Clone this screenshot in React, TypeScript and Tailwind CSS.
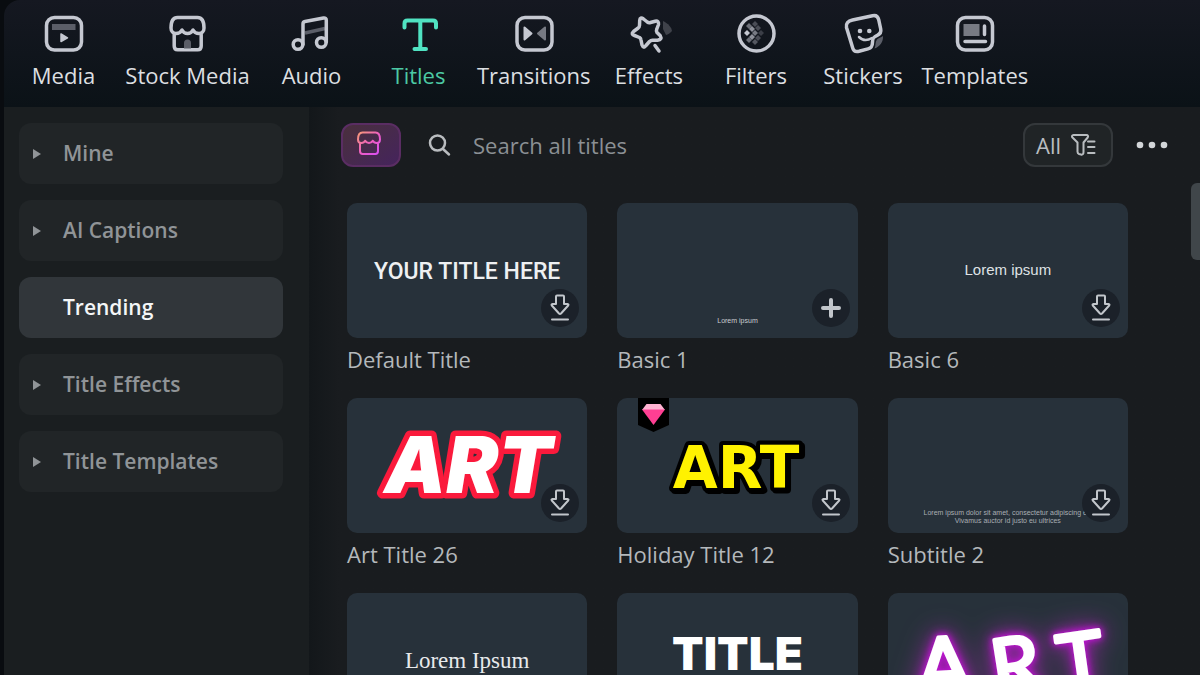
import type { ReactNode } from "react";
import clsx from "clsx";

function NavIcon({ children }: { children: ReactNode }) {
  return (
    <svg
      viewBox="0 0 40 40"
      className="h-10 w-10 overflow-visible"
      fill="none"
      stroke="currentColor"
      strokeWidth="3.5"
      strokeLinecap="round"
      strokeLinejoin="round"
      aria-hidden="true"
    >
      {children}
    </svg>
  );
}

const filterCells = [
  { x: 13, y: 12, fill: "#6d7079" },
  { x: 19, y: 10, fill: "#4a4d56" },
  { x: 16, y: 15, fill: "#8d9099" },
  { x: 22, y: 14, fill: "#4a4d56" },
  { x: 11, y: 19, fill: "#c5c8d1" },
  { x: 19, y: 19, fill: "#777a83" },
  { x: 25, y: 19, fill: "#3b3e47" },
  { x: 16, y: 23, fill: "#8d9099" },
  { x: 22, y: 24, fill: "#4a4d56" },
  { x: 13, y: 26, fill: "#6d7079" },
  { x: 19, y: 28, fill: "#555861" },
];

const navItems = [
  {
    label: "Media",
    icon: (
      <NavIcon>
        <rect x="2.5" y="3.5" width="35" height="32.5" rx="8" />
        <path d="M8 10h23.5v6H8z" fill="#5b5e68" stroke="none" />
        <path d="M17 20v7.5l6.500-3.700z" fill="currentColor" strokeWidth="1.5" />
      </NavIcon>
    ),
  },
  {
    label: "Stock Media",
    wide: true,
    icon: (
      <NavIcon>
        <path d="M9.5 3.5h20c4.5 0 6.5 4 6.5 10.5 0 3.5-2.3 5.5-5 5.5-2.8 0-5-1.5-6-3.5-1 2-3 3.5-5.5 3.500s-4.500-1.500-5.500-3.500c-1 2-3.200 3.500-6 3.500-2.700 0-5-2-5-5.500C3 7.500 5 3.500 9.500 3.500z" />
        <path d="M6.200 20.5V32c0 2.500 1.300 3.800 3.500 3.800h20c2.200 0 3.500-1.300 3.500-3.800V20.500" />
        <path d="M16 34.500V29a3.500 3.500 0 0 1 7 0v5.500z" fill="#5b5e68" stroke="none" />
      </NavIcon>
    ),
  },
  {
    label: "Audio",
    icon: (
      <NavIcon>
        <path d="M13 19l20-4.500" stroke="#5b5e68" strokeLinecap="butt" />
        <circle cx="6" cy="30.500" r="4.800" />
        <circle cx="29.300" cy="28.500" r="4.800" />
        <path d="M11 30.500V10c0-1.500.8-2.300 2-2.500L31.500 4c1.700-.3 2.800.5 2.800 2.200V28" />
      </NavIcon>
    ),
  },
  {
    label: "Titles",
    active: true,
    icon: (
      <NavIcon>
        <path d="M5.500 13.500v-4c0-2 1-3 3-3H34c2 0 3 1 3 3v4M21.300 6.500V35M15.500 35H27" strokeWidth="4" />
      </NavIcon>
    ),
  },
  {
    label: "Transitions",
    icon: (
      <NavIcon>
        <rect x="3" y="3.5" width="35" height="32.5" rx="8" />
        <path d="M10.500 13.500v12l7-6z" fill="currentColor" strokeWidth="2" />
        <path d="M31 13.500v12l-7-6z" fill="#777a83" stroke="#777a83" strokeWidth="2" />
      </NavIcon>
    ),
  },
  {
    label: "Effects",
    icon: (
      <NavIcon>
        <path d="M34 7c5.500 2.500 8.500 6.500 9 10-2 2.500-4 3.500-6 4l-3-6z" fill="#3f424a" stroke="none" />
        <path d="M4.500 17.500Q1.500 20 5.500 21.500L10.500 23.500Q11.800 24.400 12 26L13 31Q14.500 35 17 31.500L20.500 27.500Q21.800 26.300 23.500 26.200L28.500 26.200Q33.500 25.500 31.300 21.800L28 18.500Q27 16.800 27.800 15L29.500 10.500Q30 6.500 26.200 7.200L21.500 8.500Q19.700 9 18.300 8L14.500 5Q11 2.500 10.700 6.500L10.500 11.500Q10.400 13 9.200 14Z" />
        <path d="M26 31.500l4 5.500" />
      </NavIcon>
    ),
  },
  {
    label: "Filters",
    icon: (
      <NavIcon>
        <circle cx="20.500" cy="19.500" r="17.500" />
        {filterCells.map(({ x, y, fill }) => (
          <path key={`${x}-${y}`} d={`M${x} ${y - 3}l3 3-3 3-3-3z`} fill={fill} stroke="none" />
        ))}
      </NavIcon>
    ),
  },
  {
    label: "Stickers",
    icon: (
      <NavIcon>
        <path d="M40 22c.4 6-3 10.500-8.500 12.500 1.500-3 .5-6.500 2.500-9 1.500-1.700 4-2 6-3.500z" fill="#5b5e68" stroke="none" />
        <path d="M9.500 6l20-4.300c3.200-.7 5.500.8 6.200 4l2 9.300c.7 3.200-.5 5-3.500 6.300-3.700 1.500-4.700 3-4.700 6.700 0 4.200-1 6-4.500 6.900l-9 2.400c-3.500.8-5.700-.7-6.500-4L3.500 13.500C2.600 9.500 5 7 9.500 6z" />
        <path d="M16 23c3.500 3.500 8.500 3.700 13 1" strokeWidth="2.5" />
        <circle cx="17" cy="17" r="2.300" fill="currentColor" stroke="none" />
        <circle cx="26.300" cy="17" r="2.300" fill="currentColor" stroke="none" />
      </NavIcon>
    ),
  },
  {
    label: "Templates",
    icon: (
      <NavIcon>
        <rect x="2.5" y="3.5" width="35" height="32.5" rx="8" />
        <path d="M8.500 10h16v12h-16z" fill="#777a83" stroke="none" />
        <path d="M29.500 12v8.500M10 27.500h20.500" />
      </NavIcon>
    ),
  },
];

const categories = [
  { label: "Mine", expandable: true },
  { label: "AI Captions", expandable: true },
  { label: "Trending", expandable: false },
  { label: "Title Effects", expandable: true },
  { label: "Title Templates", expandable: true },
];

function StoreIcon() {
  return (
    <svg viewBox="0 0 26 26" className="h-[26px] w-[26px]" fill="none" aria-hidden="true">
      <defs>
        <linearGradient id="store" x1="0" y1="0" x2="1" y2="1">
          <stop offset="0" stopColor="#f79a76" />
          <stop offset="0.5" stopColor="#ee5fc0" />
          <stop offset="1" stopColor="#d64df5" />
        </linearGradient>
      </defs>
      <path
        d="M6.500 2.500h13c3 0 4.500 2.500 4.500 7 0 2.200-1.500 3.500-3.300 3.500s-3.200-.8-3.900-2.300C16 12.200 14.700 13 13 13s-3-.8-3.800-2.300C8.500 12.200 7.100 13 5.300 13S2 11.700 2 9.500c0-4.500 1.500-7 4.500-7zM4 13v8c0 2 1 3 2.700 3h12.600c1.700 0 2.700-1 2.700-3v-8"
        stroke="url(#store)"
        strokeWidth="2"
        strokeLinejoin="round"
      />
    </svg>
  );
}

function DownloadIcon() {
  return (
    <svg
      viewBox="0 0 20 28"
      className="h-7 w-5"
      fill="none"
      stroke="currentColor"
      strokeWidth="2"
      strokeLinecap="round"
      strokeLinejoin="round"
      aria-hidden="true"
    >
      <path d="M6 2.500q0-1 1-1h6q1 0 1 1V10h3.500q1.500.3.700 1.500L11 19.500q-1 1-2 0l-7.200-8Q1 10.300 2.500 10H6zM2 25.500h16" />
    </svg>
  );
}

function PlusIcon() {
  return (
    <svg viewBox="0 0 20 20" className="h-5 w-5" stroke="currentColor" strokeWidth="4" strokeLinecap="round" aria-hidden="true">
      <path d="M10 2v16M2 10h16" />
    </svg>
  );
}

function PremiumBadge() {
  return (
    <svg viewBox="0 0 31 34" className="absolute top-0 left-[21px] h-[34px] w-[31px]" role="img" aria-label="Premium">
      <path d="M0 0h31v27l-15.500 7L0 27z" fill="#000" />
      <path d="M8.500 6h14l4.500 6H4z" fill="#ffb3d2" />
      <path d="M4 11.500h23L15.500 27z" fill="#ff3f93" />
    </svg>
  );
}

const titles = [
  {
    name: "Default Title",
    preview: (
      <p className="pt-1 font-['Roboto',sans-serif] text-[23px] font-medium text-[#eef0f2]">YOUR TITLE HERE</p>
    ),
  },
  {
    name: "Basic 1",
    added: true,
    preview: (
      <p className="mt-auto mb-3 font-['Liberation_Sans',sans-serif] text-[7px] text-[#c9cdd1]">Lorem ipsum</p>
    ),
  },
  {
    name: "Basic 6",
    preview: (
      <p className="font-['Liberation_Sans',sans-serif] text-[15px] text-[#dfe2e5]">Lorem ipsum</p>
    ),
  },
  {
    name: "Art Title 26",
    preview: (
      <svg viewBox="0 0 240 135" className="h-full w-full">
        <text
          x="121"
          y="95"
          textAnchor="middle"
          className="font-['Inter',sans-serif] text-[78px] font-black italic"
          fill="#fff"
          stroke="#fa1a3c"
          strokeWidth="11"
          strokeLinejoin="round"
          paintOrder="stroke"
        >
          ART
        </text>
      </svg>
    ),
  },
  {
    name: "Holiday Title 12",
    premium: true,
    preview: (
      <svg viewBox="0 0 240 135" className="h-full w-full">
        <text
          x="119"
          y="90"
          textAnchor="middle"
          className="font-['DejaVu_Sans',sans-serif] text-[58px] font-bold [filter:drop-shadow(2px_2px_0_#000)]"
          fill="#fff200"
          stroke="#000"
          strokeWidth="8"
          strokeLinejoin="round"
          paintOrder="stroke"
        >
          ART
        </text>
      </svg>
    ),
  },
  {
    name: "Subtitle 2",
    preview: (
      <p className="mt-auto mb-2 text-center font-['Liberation_Sans',sans-serif] text-[7px] leading-2 whitespace-nowrap text-[#a9aeb3]">
        Lorem ipsum dolor sit amet, consectetur adipiscing elit
        <br />
        Vivamus auctor id justo eu ultrices
      </p>
    ),
  },
  {
    name: "Lorem Ipsum",
    preview: (
      <p className="font-['Liberation_Serif',serif] text-[23px] text-[#e8eaec]">Lorem Ipsum</p>
    ),
  },
  {
    name: "Title",
    preview: (
      <p className="pb-4 font-['Inter',sans-serif] text-[46px] leading-none font-black text-white">TITLE</p>
    ),
  },
  {
    name: "Art Title",
    preview: (
      <svg viewBox="0 0 240 135" className="h-full w-full">
        <g
          className="font-['Lato',sans-serif] text-[78px] font-normal [filter:drop-shadow(0_0_3px_#c414d8)_drop-shadow(0_0_5px_#a316b4)_drop-shadow(0_0_12px_#8a2d98)]"
          fill="#fff"
          stroke="#fff"
          strokeWidth="4"
          strokeLinejoin="round"
        >
          <text x="29" y="100" transform="rotate(-3 54 70)">A</text>
          <text x="103" y="100" transform="rotate(-9 125 70)">R</text>
          <text x="169" y="96" transform="rotate(-8 190 65)">T</text>
        </g>
      </svg>
    ),
  },
];

function TopNav() {
  return (
    <nav
      aria-label="Library"
      className="flex h-[107px] shrink-0 rounded-tl-2xl bg-linear-to-b from-[#151821] to-[#0b1217] pt-[14px] pl-[6px]"
    >
      {navItems.map(({ label, icon, active, wide }) => (
        <button
          key={label}
          type="button"
          className={clsx(
            "flex h-fit shrink-0 flex-col items-center px-[5px]",
            wide ? "min-w-[141px]" : "min-w-[107px]",
            active ? "text-[#50e3c2]" : "text-[#c5c8d1]",
          )}
        >
          {icon}
          <span className={clsx("mt-[6px] text-[22px] leading-[30px]", active ? "text-[#4cc9a4]" : "text-[#dcdfe1]")}>
            {label}
          </span>
        </button>
      ))}
    </nav>
  );
}

function Sidebar() {
  return (
    <aside className="w-[305px] shrink-0 bg-[#1a1e20] pt-4 pr-[26px] pl-[15px]">
      <ul className="flex flex-col gap-4">
        {categories.map(({ label, expandable }) => (
          <li key={label}>
            <button
              type="button"
              className={clsx(
                "flex h-[61px] w-full items-center rounded-xl pl-[14px] text-[21px] font-semibold",
                expandable ? "bg-[#212527] text-[#909497]" : "bg-[#31363a] text-[#f4f6f7]",
              )}
            >
              <svg viewBox="0 0 8 10" className="mr-[22px] h-[10px] w-2" fill="currentColor" aria-hidden="true">
                {expandable && <path d="M0 0l8 5-8 5z" />}
              </svg>
              {label}
            </button>
          </li>
        ))}
      </ul>
    </aside>
  );
}

function Toolbar() {
  return (
    <div className="flex h-11 items-center px-8">
      <button
        type="button"
        aria-label="Store"
        className="flex h-11 w-[60px] shrink-0 items-center justify-center rounded-xl border-2 border-[#5a2d63] bg-linear-to-br from-[#4a2f3c] to-[#45235c] pr-1 pb-1"
      >
        <StoreIcon />
      </button>
      <label htmlFor="search" className="ml-[26px] shrink-0 text-[#b9bcbf]">
        <svg
          viewBox="0 0 24 24"
          className="h-6 w-6"
          fill="none"
          stroke="currentColor"
          strokeWidth="2.5"
          strokeLinecap="round"
          role="img"
          aria-label="Search"
        >
          <circle cx="10.5" cy="10" r="7.500" />
          <path d="M16 16l6 5.500" />
        </svg>
      </label>
      <input
        id="search"
        type="text"
        placeholder="Search all titles"
        className="ml-[22px] min-w-0 flex-1 bg-transparent text-[22px] text-[#d0d3d6] outline-none placeholder:text-[#8b9094]"
      />
      <button
        type="button"
        className="flex h-11 w-[90px] shrink-0 items-center gap-[10px] rounded-xl border-2 border-[#34383b] bg-[#202426] pl-[11px] text-[22px] text-[#b9bdc0]"
      >
        All
        <svg
          viewBox="0 0 26 24"
          className="h-6 w-[26px]"
          fill="none"
          stroke="currentColor"
          strokeWidth="2"
          strokeLinecap="round"
          strokeLinejoin="round"
          aria-hidden="true"
        >
          <path d="M2.500 2h13c1.500 0 2 1.500 1.200 2.500l-4.200 5V19c0 2-.8 3-2.500 2.500L8 21c-1.200-.4-1.500-1-1.500-2.200V9.500l-5-5C.6 3.500 1 2 2.500 2zM17 8.500h6.500M17 14h6.500M17 20h6.500" />
        </svg>
      </button>
      <button type="button" aria-label="More" className="ml-[23px] shrink-0 text-[#d3d6d9]">
        <svg viewBox="0 0 32 8" className="h-2 w-8" fill="currentColor" aria-hidden="true">
          <circle cx="4" cy="4" r="3.300" />
          <circle cx="16" cy="4" r="3.300" />
          <circle cx="28" cy="4" r="3.300" />
        </svg>
      </button>
    </div>
  );
}

export default function App() {
  return (
    <div className="flex h-screen flex-col overflow-hidden bg-[#090c10] pl-1 font-['Open_Sans',sans-serif]">
      <TopNav />

      <div className="flex min-h-0 flex-1">
        <Sidebar />

        <main className="relative min-w-0 flex-1 overflow-hidden bg-linear-to-r from-[#13171a] to-[#191c1f] to-[30px] pt-4">
          <Toolbar />

          <section aria-label="Titles" className="grid grid-cols-3 gap-x-[30px] gap-y-6 pt-9 pr-[72px] pl-[38px]">
            {titles.map(({ name, preview, added, premium }) => (
              <article key={name}>
                <div className="relative flex aspect-video items-center justify-center rounded-[10px] bg-[#27313a]">
                  {preview}
                  {premium && <PremiumBadge />}
                  <button
                    type="button"
                    aria-label={added ? `Add ${name}` : `Download ${name}`}
                    className="absolute right-2 bottom-[11px] flex h-[38px] w-[38px] items-center justify-center rounded-full bg-[#1b2129] text-[#c2c6cb]"
                  >
                    {added ? <PlusIcon /> : <DownloadIcon />}
                  </button>
                </div>
                <h3 className="mt-[6px] text-[22px] leading-[30px] text-[#b4b8bb]">{name}</h3>
              </article>
            ))}
          </section>

          {/* Scrollbar thumb */}
          <div className="absolute top-[76px] right-0 h-[77px] w-[9px] rounded-l-md bg-[#40464a]" />
        </main>
      </div>
    </div>
  );
}
